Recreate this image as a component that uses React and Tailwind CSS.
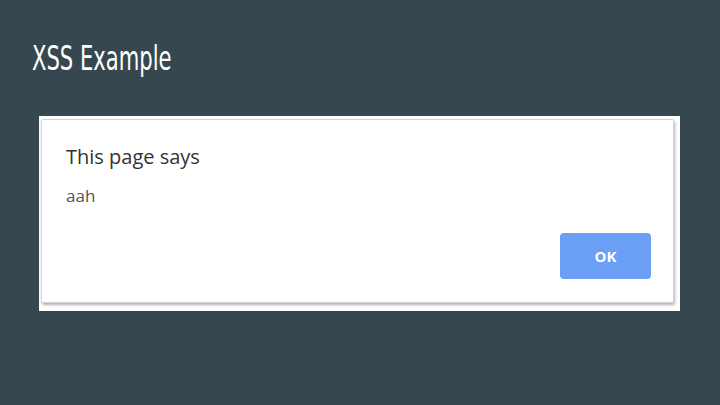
import React from "react";

export default function App() {
  return (
    <div className="w-[720px] h-[405px] bg-[#37474f] overflow-hidden">
      {/* Slide title */}
      <div className="pl-[32px] pt-[38px] h-[116px]">
        <h1
          className="text-[34px] leading-[40px] text-white inline-block origin-left scale-x-[0.69]"
          style={{ fontFamily: '"DejaVu Sans Condensed", "DejaVu Sans", sans-serif' }}
        >
          XSS Example
        </h1>
      </div>

      {/* Screenshot of the alert dialog */}
      <div className="ml-[39px] w-[641px] h-[195px] bg-white pt-[3px] pl-[2px]">
        <div
          className="w-[633px] h-[184px] bg-white border border-[#d4d4d4] rounded-[2px] shadow-[1px_2px_3px_rgba(0,0,0,0.3)] flex flex-col"
          style={{ fontFamily: '"Open Sans", "Liberation Sans", sans-serif' }}
        >
          <div className="pl-[24px] pt-[25px] text-[20px] leading-[23px] text-[#333]">This page says</div>
          <div className="pl-[24px] pt-[18px] text-[17px] leading-[20px] text-[#555]">aah</div>
          <div className="flex justify-end pr-[22px] pt-[27px]">
            <button className="w-[91px] h-[46px] rounded-[4px] bg-[#6b9ff5] text-white text-[15px] font-bold">
              OK
            </button>
          </div>
        </div>
      </div>
    </div>
  );
}
